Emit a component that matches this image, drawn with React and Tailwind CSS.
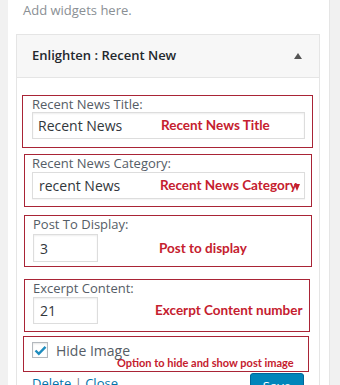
import React from 'react'

const sans = { fontFamily: '"Open Sans", "Noto Sans", sans-serif' }

function Note({ children, className = '' }) {
  return (
    <span className={`font-bold text-[#c5202e] whitespace-nowrap ${className}`} style={{ fontFamily: 'Lato, "Liberation Sans", sans-serif' }}>
      {children}
    </span>
  )
}

function Label({ children }) {
  return <div className="h-4 leading-4 text-[13px] text-[#555d66]">{children}</div>
}

export default function App() {
  return (
    <div className="w-[340px] h-[385px] overflow-hidden bg-[#f1f1f1] flex" style={sans}>
      <div className="ml-2 w-[322px] bg-white border-r border-[#e5e5e5] pl-2 pr-[9px]">
        <div className="h-5 leading-5 text-[13px] text-[#8a8f94] pl-[7px]">Add widgets here.</div>

        <div className="mt-[14px] border border-[#e5e5e5]">
          {/* widget header */}
          <div className="h-[43px] bg-[#f7f7f7] border-b border-[#e5e5e5] flex items-center justify-between pl-[15px] pr-[17px]">
            <span className="text-[13px] font-semibold text-[#23282d]">Enlighten : Recent New</span>
            <span className="w-0 h-0 border-l-[4px] border-r-[4px] border-b-[6px] border-l-transparent border-r-transparent border-b-[#555]" />
          </div>

          {/* widget body */}
          <div className="pt-[17px] pb-[1px]">
            {/* Recent News Title */}
            <div className="ml-[5px] mr-[6px] border border-[#a92436] pl-[9px] pb-2">
              <Label>Recent News Title:</Label>
              <div className="relative w-[273px] h-[27px] border border-[#ddd] shadow-[inset_0_1px_2px_rgba(0,0,0,0.07)] flex items-center pl-[5px] text-[14px] text-[#32373c]">
                Recent News
                <Note className="absolute left-[128px] top-[4px] text-[13.5px] leading-4">Recent News Title</Note>
              </div>
            </div>

            {/* Recent News Category */}
            <div className="mt-[6px] ml-[7px] mr-[7px] border border-[#a92436] pl-[7px] pb-[7px]">
              <Label>Recent News Category:</Label>
              <div className="relative mt-[1px] w-[273px] h-[27px] border border-[#ddd] shadow-[0_1px_1px_rgba(0,0,0,0.04)] flex items-center pl-[6px] text-[14px] text-[#32373c]">
                recent News
                <Note className="absolute left-[127px] top-[4px] text-[13.5px] leading-4">Recent News Category</Note>
                <span className="absolute left-[261px] top-[11px] w-0 h-0 border-l-[3px] border-r-[3px] border-t-[7px] border-l-transparent border-r-transparent border-t-[#c5202e]" />
              </div>
            </div>

            {/* Post To Display */}
            <div className="mt-2 ml-[7px] mr-[7px] border border-[#a92436] pl-[8px] pb-1">
              <Label>Post To Display:</Label>
              <div className="mt-[2px] flex items-center">
                <div className="w-[65px] h-[28px] border border-[#ddd] shadow-[inset_0_1px_2px_rgba(0,0,0,0.07)] flex items-center pl-[6px] text-[14px] text-[#32373c]">3</div>
                <Note className="ml-[61px] text-[13.5px]">Post to display</Note>
              </div>
            </div>

            {/* Excerpt Content */}
            <div className="mt-3 ml-[7px] mr-[9px] border border-[#a92436] pl-[8px] pb-[7px]">
              <Label>Excerpt Content:</Label>
              <div className="mt-[1px] flex items-center">
                <div className="w-[65px] h-[27px] border border-[#ddd] shadow-[inset_0_1px_2px_rgba(0,0,0,0.07)] flex items-center pl-[6px] text-[14px] text-[#32373c]">21</div>
                <Note className="ml-[57px] text-[13.5px]">Excerpt Content number</Note>
              </div>
            </div>

            {/* Hide Image */}
            <div className="mt-1 ml-[6px] mr-[10px] border border-[#a92436] pl-2 pt-[5px] pb-1">
              <div className="flex items-center h-4">
                <span className="w-4 h-4 border border-[#b4b9be] bg-white flex items-center justify-center shadow-[inset_0_1px_2px_rgba(0,0,0,0.1)]">
                  <svg width="13" height="11" viewBox="0 0 13 11">
                    <path d="M1.5 5.5 L4.8 8.8 L11.5 1.8" fill="none" stroke="#1e8cbe" strokeWidth="2.4" />
                  </svg>
                </span>
                <span className="ml-2 text-[14px] text-[#555d66]">Hide Image</span>
              </div>
              <div className="-mt-[3px] h-3 leading-3 pl-[85px]">
                <Note className="text-[11px]">Option to hide and show post image</Note>
              </div>
            </div>

            {/* footer */}
            <div className="mt-[1px] flex items-start justify-between pl-[15px] pr-[15px]">
              <div className="pt-[1px] text-[13px] leading-[18px]">
                <span className="text-[#0073aa]">Delete</span>
                <span className="text-[#72777c]"> | </span>
                <span className="text-[#0073aa]">Close</span>
              </div>
              <button className="h-7 px-3 rounded-[3px] bg-[#0085ba] border border-[#006799] text-white text-[13px] shadow-[0_1px_0_#006799]">Save</button>
            </div>
          </div>
        </div>
      </div>
    </div>
  )
}
